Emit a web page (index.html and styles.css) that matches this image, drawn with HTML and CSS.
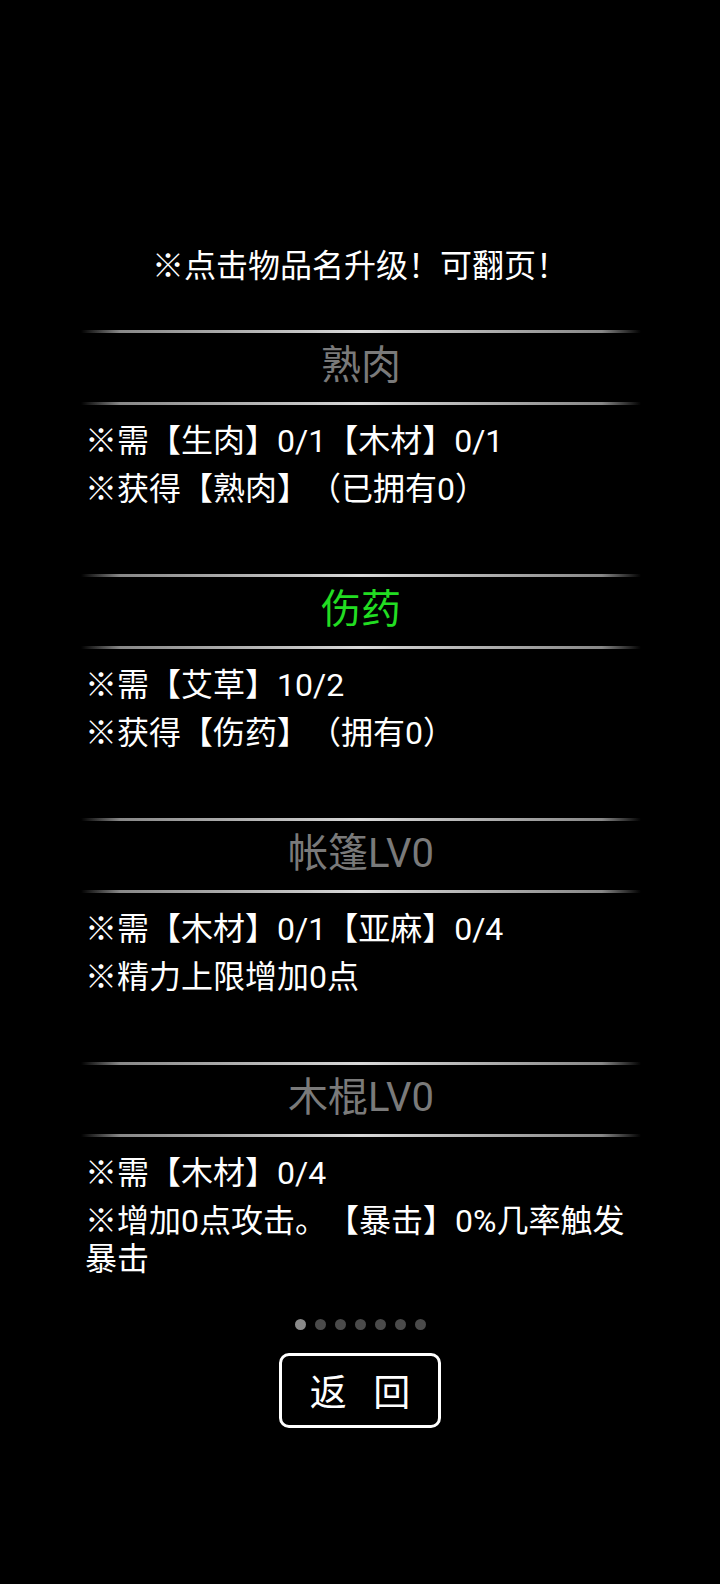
FILE: index.html
```html
<!DOCTYPE html>
<html lang="zh-CN">
<head>
<meta charset="utf-8">
<title>合成</title>
<link rel="stylesheet" href="styles.css">
</head>
<body>
<main class="page">
  <div class="hint">※点击物品名升级！可翻页！</div>
  <section class="list">
    <div class="item">
      <div class="divider"></div>
      <div class="title">熟肉</div>
      <div class="divider"></div>
      <div class="desc">
        <p>※需【生肉】0/1【木材】0/1</p>
        <p>※获得【熟肉】（已拥有0）</p>
      </div>
    </div>
    <div class="item">
      <div class="divider"></div>
      <div class="title green">伤药</div>
      <div class="divider"></div>
      <div class="desc">
        <p>※需【艾草】10/2</p>
        <p>※获得【伤药】（拥有0）</p>
      </div>
    </div>
    <div class="item">
      <div class="divider"></div>
      <div class="title">帐篷LV0</div>
      <div class="divider"></div>
      <div class="desc">
        <p>※需【木材】0/1【亚麻】0/4</p>
        <p>※精力上限增加0点</p>
      </div>
    </div>
    <div class="item">
      <div class="divider"></div>
      <div class="title">木棍LV0</div>
      <div class="divider"></div>
      <div class="desc">
        <p>※需【木材】0/4</p>
        <p>※增加0点攻击。【暴击】0%几率触发暴击</p>
      </div>
    </div>
  </section>
  <div class="dots">
    <span class="dot active"></span>
    <span class="dot"></span>
    <span class="dot"></span>
    <span class="dot"></span>
    <span class="dot"></span>
    <span class="dot"></span>
    <span class="dot"></span>
  </div>
  <div class="actions">
    <button class="back">返 回</button>
  </div>
</main>
</body>
</html>
```
FILE: styles.css
```css
html, body {
  margin: 0;
  padding: 0;
  background: #000;
}
body {
  width: 720px;
  height: 1584px;
  overflow: hidden;
  color: #fff;
  font-family: Roboto, "Noto Sans CJK SC", sans-serif;
  text-spacing-trim: space-all;
}
.page {
  display: flex;
  flex-direction: column;
  align-items: center;
  padding-top: 242px;
}
.hint {
  font-size: 32px;
  line-height: 48px;
  height: 48px;
  text-align: center;
}
.list {
  width: 560px;
  margin-top: 40px;
  margin-left: 2px;
  display: flex;
  flex-direction: column;
}
.item {
  height: 244px;
  display: flex;
  flex-direction: column;
}
.divider {
  height: 3px;
  background: linear-gradient(to right, rgba(200,200,200,0) 0%, rgba(170,170,170,0.8) 7%, #d8d8d8 50%, rgba(170,170,170,0.8) 93%, rgba(200,200,200,0) 100%);
}
.title {
  height: 69px;
  line-height: 66px;
  text-align: center;
  font-size: 40px;
  color: #7a7a7a;
}
.title.green {
  color: #22dd22;
}
.desc {
  padding: 17px 0 0 4px;
}
.desc p {
  margin: 0 0 10px 0;
  font-size: 32px;
  line-height: 38px;
}
.dots {
  display: flex;
  gap: 9px;
  margin-top: 13px;
  height: 11px;
}
.dot {
  width: 11px;
  height: 11px;
  border-radius: 50%;
  background: #4a4a4a;
}
.dot.active {
  background: #8a8a8a;
}
.actions {
  margin-top: 23px;
}
.back {
  width: 162px;
  height: 75px;
  box-sizing: border-box;
  border: 3px solid #fff;
  border-radius: 10px;
  background: #000;
  color: #fff;
  font-family: "Noto Sans CJK SC", sans-serif;
  font-size: 37px;
  word-spacing: 18px;
  padding: 0;
  line-height: 1;
}
```
